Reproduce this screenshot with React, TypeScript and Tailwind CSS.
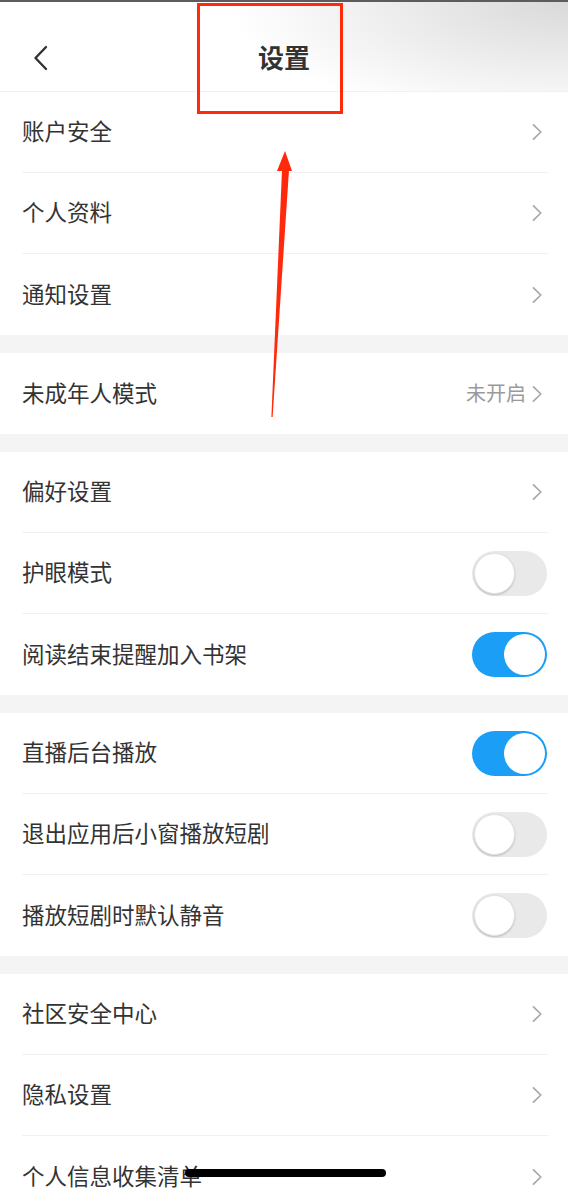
import React from 'react';

type Item = {
  label: string;
  kind: 'link' | 'toggle';
  on?: boolean;
  value?: string;
};

const groups: Item[][] = [
  [
    { label: '账户安全', kind: 'link' },
    { label: '个人资料', kind: 'link' },
    { label: '通知设置', kind: 'link' },
  ],
  [{ label: '未成年人模式', kind: 'link', value: '未开启' }],
  [
    { label: '偏好设置', kind: 'link' },
    { label: '护眼模式', kind: 'toggle', on: false },
    { label: '阅读结束提醒加入书架', kind: 'toggle', on: true },
  ],
  [
    { label: '直播后台播放', kind: 'toggle', on: true },
    { label: '退出应用后小窗播放短剧', kind: 'toggle', on: false },
    { label: '播放短剧时默认静音', kind: 'toggle', on: false },
  ],
  [
    { label: '社区安全中心', kind: 'link' },
    { label: '隐私设置', kind: 'link' },
    { label: '个人信息收集清单', kind: 'link' },
  ],
];

function Chevron() {
  return (
    <svg width="10" height="18" viewBox="0 0 10 18" className="mr-[6px] shrink-0">
      <path d="M1.5 1.8 L8.8 9 L1.5 16.2" fill="none" stroke="#a8a8a8" strokeWidth="1.7" strokeLinecap="round" strokeLinejoin="round" />
    </svg>
  );
}

function Toggle({ on }: { on: boolean }) {
  return on ? (
    <div className="w-[75px] h-[45px] rounded-full bg-[#1a9ef6] flex items-center justify-end pr-[2px] mr-[1px]">
      <div className="w-[41px] h-[41px] rounded-full bg-white"></div>
    </div>
  ) : (
    <div className="w-[75px] h-[45px] rounded-full bg-[#e9e9ea] flex items-center pl-[2px] mr-[1px]">
      <div className="w-[41px] h-[41px] rounded-full bg-white shadow-[0_1px_2px_rgba(0,0,0,0.2)] border border-[#e2e2e2]"></div>
    </div>
  );
}

function Row({ item, last }: { item: Item; last: boolean }) {
  return (
    <div className="bg-white pl-[22px] pr-[20px]">
      <div className={`h-[81px] flex items-center justify-between ${last ? '' : 'border-b border-[#f1f1f1]'}`}>
        <span className="text-[22.5px] text-[#333333] leading-none -mt-[3px]">{item.label}</span>
        {item.kind === 'toggle' ? (
          <Toggle on={!!item.on} />
        ) : (
          <div className="flex items-center gap-[6px]">
            {item.value && <span className="text-[20px] text-[#9a9a9a] leading-none -mt-[2px]">{item.value}</span>}
            <Chevron />
          </div>
        )}
      </div>
    </div>
  );
}

export default function App() {
  return (
    <div
      className="relative w-[568px] h-[1188px] overflow-hidden bg-[#f4f4f4]"
      style={{ fontFamily: '"Noto Sans CJK SC", "Noto Sans", sans-serif' }}
    >
      <div className="h-[2px] bg-[#5c5c5c]"></div>
      <div className="h-[90px] flex items-center justify-center relative bg-[radial-gradient(ellipse_340px_120px_at_100%_0%,#d9d9d9,#ffffff)] border-b border-[#f1f1f1]">
        <svg width="16" height="28" viewBox="0 0 16 28" className="absolute left-[33px] top-[43px]">
          <path d="M13 2 L2.5 13 L13 24" fill="none" stroke="#333333" strokeWidth="2.4" strokeLinecap="round" strokeLinejoin="round" />
        </svg>
        <span className="text-[26px] font-bold text-[#333333] leading-none mt-[20px]">设置</span>
      </div>

      <div className="flex flex-col gap-[18px]">
        {groups.map((g, gi) => (
          <div key={gi} className="flex flex-col">
            {g.map((item, i) => (
              <Row key={item.label} item={item} last={i === g.length - 1} />
            ))}
          </div>
        ))}
      </div>

      {/* annotation overlay */}
      <svg className="absolute inset-0 pointer-events-none" width="568" height="1188">
        <rect x="198.5" y="4.5" width="143" height="108" fill="none" stroke="#ff2a0c" strokeWidth="3" />
        <polygon points="285,151 277,171 292,171" fill="#ff2a0c" />
        <polygon points="282,170 289,170 272.6,417 271.4,417" fill="#ff2a0c" />
      </svg>

      <div className="absolute left-[185px] top-[1169px] w-[201px] h-[8px] rounded-full bg-black"></div>
    </div>
  );
}
